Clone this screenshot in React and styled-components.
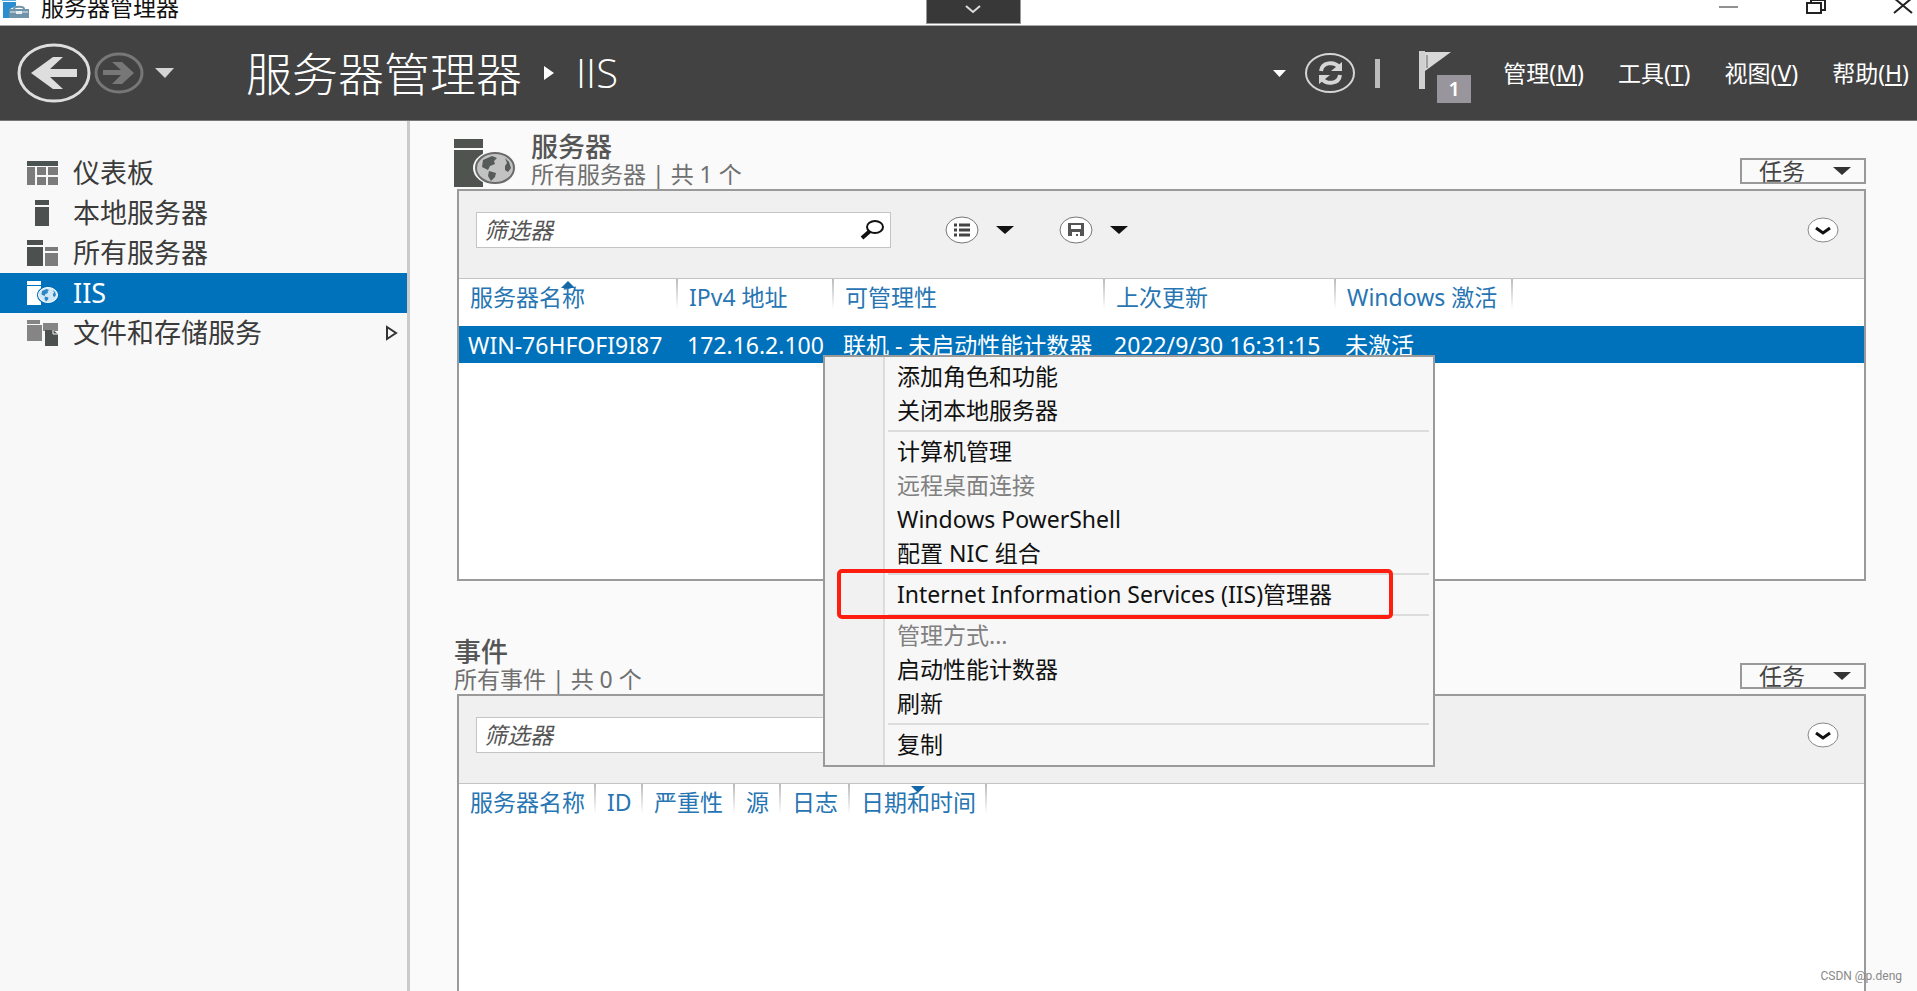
import React from "react";
import { createGlobalStyle, styled, css } from "styled-components";

const GlobalStyle = createGlobalStyle`
  * {
    box-sizing: border-box;
  }
  body {
    margin: 0;
    background: #fafafa;
    font-family: "Noto Sans", "Noto Sans CJK SC", sans-serif;
    font-size: 23px;
    color: #222;
  }
  button, input {
    font: inherit;
    color: inherit;
    padding: 0;
    border: none;
    background: none;
  }
  a {
    color: inherit;
    text-decoration: none;
  }
  svg {
    display: block;
    flex: none;
  }
`;

const Window = styled.div`
  display: flex;
  flex-direction: column;
  height: 100vh;
  overflow: hidden;
  position: relative;
`;

const TitleBar = styled.div`
  display: flex;
  justify-content: space-between;
  height: 26px;
  padding: 0 4px 0 2px;
  background: #fff;
  border-bottom: 1px solid #aaa;
`;
const AppName = styled.div`
  display: flex;
  gap: 12px;
  line-height: 14px;
  color: #111;
`;
const WindowControls = styled.div`
  display: flex;
  gap: 67px;
  align-items: flex-start;
`;
const PullTab = styled.button`
  position: absolute;
  top: 0;
  left: calc(50% - 33px);
  width: 95px;
  height: 24px;
  display: flex;
  justify-content: center;
  padding-top: 5px;
  background: #383838;
  border: 1px solid #999;
  border-top: none;
`;

const Header = styled.header`
  display: flex;
  align-items: center;
  height: 95px;
  flex: none;
  padding: 0 8px 0 17px;
  background: #424242;
  border-bottom: 1px solid #777;
  color: #fff;
`;
const NavButtons = styled.div`
  display: flex;
  align-items: center;
  gap: 3px;
`;
const Breadcrumb = styled.h1`
  display: flex;
  align-items: center;
  gap: 22px;
  margin: 0 auto 0 67px;
  font-family: "Open Sans", "Noto Sans CJK SC", sans-serif;
  font-size: 46px;
  font-weight: 300;
  line-height: 60px;
`;
const CurrentPage = styled.span`
  font-size: 40px;
`;
const HeaderTools = styled.div`
  display: flex;
  align-items: center;
  gap: 19px;
`;
const Divider = styled.span`
  width: 5px;
  height: 29px;
  background: #bbb;
`;
const FlagButton = styled.button`
  position: relative;
  display: flex;
  align-items: flex-start;
  width: 53px;
  height: 52px;
  margin: 8px 0 0 19px;
  color: #fff;
`;
const Badge = styled.span`
  position: absolute;
  right: 0;
  bottom: 0;
  width: 34px;
  height: 28px;
  background: #99959d;
  font-weight: 600;
  font-size: 20px;
  line-height: 28px;
`;
const MenuBar = styled.nav`
  display: flex;
  gap: 34px;
  margin-left: 32px;
`;
const MenuBarButton = styled.button`
  line-height: 32px;
  white-space: nowrap;
`;

const Body = styled.div`
  display: flex;
  flex: 1;
  min-height: 0;
`;
const Sidebar = styled.nav`
  flex: none;
  width: 410px;
  padding-top: 32px;
  background: #f8f8f8;
  border-right: 3px solid #cbcbcb;
`;
const SideLink = styled.a`
  display: flex;
  align-items: center;
  gap: 15px;
  height: 40px;
  padding: 0 9px 0 27px;
  font-size: 27px;
  line-height: 40px;
  color: #3b3b3b;

  span {
    flex: 1;
  }
  ${(props) =>
    props.$active &&
    css`
      background: #0072bc;
      color: #fff;
    `}
`;

const Main = styled.main`
  flex: 1;
  min-width: 0;
  display: flex;
  flex-direction: column;
  gap: 57px;
  padding: 12px 51px 0 44px;
`;
const Section = styled.section`
  display: flex;
  flex-direction: column;
  gap: 2px;
  ${(props) => props.$grow && "flex: 1; min-height: 0;"}
`;
const SectionHead = styled.div`
  display: flex;
  align-items: flex-end;
  gap: 15px;
  height: 54px;
`;
const SectionTitle = styled.div`
  flex: 1;
  color: #707070;

  h2 {
    margin: 0;
    font-size: 27px;
    line-height: 28px;
    font-weight: 500;
    color: #555;
  }
  p {
    margin: 0;
    line-height: 26px;
  }
`;
const TaskButton = styled.button`
  display: flex;
  align-items: center;
  justify-content: space-between;
  width: 126px;
  height: 26px;
  margin-bottom: 3px;
  padding: 0 13px 0 17px;
  border: 2px solid #999;
  line-height: 22px;
  color: #444;
`;
const Panel = styled.div`
  margin-left: 3px;
  background: #fff;
  border: 2px solid #9a9a9a;
  ${(props) =>
    props.$grow ? "flex: 1; border-bottom: none;" : "min-height: 392px;"}
`;
const Toolbar = styled.div`
  display: flex;
  align-items: center;
  padding: 21px 25px 30px 17px;
  background: #f0f0f0;
  border-bottom: 1px solid #c4c4c4;
`;
const SearchBox = styled.div`
  display: flex;
  align-items: center;
  width: 415px;
  height: 36px;
  padding: 0 6px 0 7px;
  background: #fff;
  border: 1px solid #c4c4c4;

  input {
    flex: 1;
    min-width: 0;
    outline: none;
  }
  input::placeholder {
    color: #555;
    font-style: italic;
    opacity: 1;
  }
`;
const ToolGroup = styled.div`
  display: flex;
  align-items: center;
  gap: 17px;
  margin-left: ${(props) => props.$offset}px;
`;
const ExpandButton = styled.button`
  margin-left: auto;
`;

const Table = styled.table`
  width: 100%;
  table-layout: fixed;
  border-collapse: collapse;
  white-space: nowrap;

  th {
    position: relative;
    height: 47px;
    padding: 0 0 11px 11px;
    text-align: left;
    font-weight: 400;
    color: #2775b3;
  }
  th:not(:last-child) {
    background: linear-gradient(#bbb, #fff) right top / 2px 30px no-repeat;
  }
  th button {
    display: block;
    line-height: 36px;
  }
  td {
    height: 37px;
    padding: 2px 0 0 9px;
    line-height: 35px;
  }
`;
const SelectedRow = styled.tr`
  background: #0072bc;
  color: #fff;
`;
const SortMark = styled.svg`
  position: absolute;
  top: 2px;
  left: calc(50% - 8px);
`;

const ContextMenu = styled.ul`
  position: absolute;
  top: 355px;
  left: 823px;
  width: 612px;
  margin: 0;
  padding: 2px 4px 4px 0;
  list-style: none;
  background: linear-gradient(to right, #f1f1f1 58px, #dcdcdc 58px 60px, #f7f7f7 60px);
  border: 2px solid #9a9a9a;
`;
const MenuItem = styled.li`
  position: relative;

  button {
    display: block;
    width: 100%;
    padding-left: 72px;
    text-align: left;
    line-height: 34px;
    color: #111;
  }
  button:disabled {
    color: #808080;
  }
`;
const MenuSeparator = styled.li`
  height: 2px;
  margin: 3px 0 2px 63px;
  background: #dcdcdc;
`;
const Highlight = styled.span`
  position: absolute;
  top: -8px;
  left: 12px;
  width: 556px;
  height: 50px;
  border: 4px solid #ff1d0f;
  border-radius: 5px;
  pointer-events: none;
`;
const Watermark = styled.small`
  position: absolute;
  right: 15px;
  bottom: 7px;
  font-family: Roboto, sans-serif;
  font-size: 12px;
  line-height: 16px;
  color: #888;
`;

function Caret({ width = 18, height = 8, color = "#111" }) {
  return (
    <svg width={width} height={height} viewBox="0 0 18 8" preserveAspectRatio="none">
      <path d="M0 0h18L9 8z" fill={color} />
    </svg>
  );
}

function ToolboxIcon() {
  return (
    <svg width="27" height="18" viewBox="0 0 27 18">
      <path d="M1 2h13v4L8 9v9H1z" fill="#2a8fd0" />
      <path d="M0 0h14v1H0z" fill="#5cb1e4" />
      <path d="M12 9c0-3 10-3 10 0" fill="none" stroke="#6f93a8" strokeWidth="2" />
      <path d="M7 9h20v9H7z" fill="#6f93a8" />
      <path d="M8 12h18" stroke="#e8f0f4" />
      <path d="M14 11h6v3h-6z" fill="#e8f0f4" />
    </svg>
  );
}

function BackIcon() {
  return (
    <svg width="74" height="60" viewBox="0 0 74 60">
      <ellipse cx="37" cy="30" rx="35" ry="28" fill="none" stroke="#dedede" strokeWidth="3" />
      <path d="M14 30 36 14h10L33 26h27v8H33l13 12H36z" fill="#dedede" />
    </svg>
  );
}

function ForwardIcon() {
  return (
    <svg width="50" height="42" viewBox="0 0 50 42">
      <ellipse cx="25" cy="21" rx="23" ry="19" fill="none" stroke="#777" strokeWidth="3" />
      <path d="M40 21 28 10H18l9 8H9v5h18l-9 9h10z" fill="#777" />
    </svg>
  );
}

function RefreshIcon() {
  return (
    <svg width="51" height="42" viewBox="0 0 51 42">
      <ellipse cx="25" cy="21" rx="24" ry="19" fill="none" stroke="#d5d5d5" strokeWidth="2" />
      <path d="M16 19c1-9 13-10 18-4M35 23c-1 9-13 10-18 4" fill="none" stroke="#d5d5d5" strokeWidth="4" />
      <path d="M37 10v9H26zM14 32v-9h11z" fill="#d5d5d5" />
    </svg>
  );
}

function FlagIcon() {
  return (
    <svg width="34" height="39" viewBox="0 0 34 39">
      <path d="M1 0h6v38H1z" fill="#d0d0d0" />
      <path d="M7 1h26L7 20z" fill="#d8d8d8" />
      <path d="M9 4v13" stroke="#666" />
    </svg>
  );
}

function Globe({ x, y, scale, land, sea, ring }) {
  return (
    <g transform={`translate(${x} ${y}) scale(${scale})`}>
      <ellipse cx="20" cy="16" rx="19" ry="15" fill={sea} stroke={ring} strokeWidth="2" />
      <path d="M8 8l9-4 5 2-3 3 1 3-5 2-2 4-6-3zM14 19l7 2-1 4-4 4-3-5zM30 6l4 4 2 6-3 4-3-2 0-4 2-3z" fill={land} />
    </g>
  );
}

function DashboardIcon() {
  return (
    <svg width="31" height="24" viewBox="0 0 31 24">
      <path d="M0 0h31v5H0z" fill="#4a5252" />
      <path d="M0 6h8v18H0zM10 6h9v8h-9zM21 6h10v8H21zM10 16h9v8h-9zM21 16h10v8H21z" fill="#7b7b7b" />
    </svg>
  );
}

function LocalServerIcon() {
  return (
    <svg width="31" height="26" viewBox="0 0 31 26">
      <path d="M8 0h14v5H8zM8 7h14v19H8z" fill="#4c514f" />
    </svg>
  );
}

function AllServersIcon() {
  return (
    <svg width="31" height="26" viewBox="0 0 31 26">
      <path d="M0 0h16v5H0zM0 7h16v19H0z" fill="#4c514f" />
      <path d="M18 7h13v4H18zM18 13h13v13H18z" fill="#7b7b7b" />
    </svg>
  );
}

function IisIcon() {
  return (
    <svg width="31" height="26" viewBox="0 0 31 26">
      <path d="M0 1h14v4H0zM0 6h14v19H0z" fill="#fff" />
      <ellipse cx="21" cy="15" rx="11" ry="9" fill="#0072bc" />
      <Globe x="11" y="7" scale="0.5" land="#2f86c4" sea="#d3e8f6" ring="#fff" />
    </svg>
  );
}

function StorageIcon() {
  return (
    <svg width="31" height="26" viewBox="0 0 31 26">
      <path d="M0 0h13v4H0zM0 5h15v16H0zM16 3h15v8H16z" fill="#858585" />
      <path d="M18 10h8l5 4v12H18z" fill="#4c514f" />
      <path d="M26 10v4h5" fill="none" stroke="#f8f8f8" />
    </svg>
  );
}

function ServerGlobeIcon() {
  return (
    <svg width="62" height="48" viewBox="0 0 62 48">
      <path d="M0 0h29v9H0zM0 11h29v37H0z" fill="#4f5451" />
      <ellipse cx="41" cy="29" rx="22" ry="17" fill="#f9f9f9" />
      <Globe x="21" y="13" scale="1" land="#565a58" sea="#c2c2c2" ring="#6a6a6a" />
    </svg>
  );
}

function SearchIcon() {
  return (
    <svg width="24" height="20" viewBox="0 0 24 20">
      <ellipse cx="15" cy="7" rx="8" ry="6" fill="none" stroke="#111" strokeWidth="2" />
      <path d="M10 11 2 18" stroke="#111" strokeWidth="4" />
    </svg>
  );
}

function ListIcon() {
  return (
    <svg width="34" height="28" viewBox="0 0 34 28">
      <ellipse cx="17" cy="14" rx="16" ry="13" fill="#fff" stroke="#777" />
      <path d="M9 9h3M14 9h11M9 14h3M14 14h11M9 19h3M14 19h11" stroke="#444" strokeWidth="3" />
    </svg>
  );
}

function SaveIcon() {
  return (
    <svg width="34" height="28" viewBox="0 0 34 28">
      <ellipse cx="17" cy="14" rx="16" ry="13" fill="#fff" stroke="#777" />
      <path d="M9 7h16v13H9z" fill="#555" />
      <path d="M12 9h10v4H12zM13 16h8v4h-2v-2h-2v2h-4z" fill="#fff" />
    </svg>
  );
}

function ExpandIcon() {
  return (
    <svg width="32" height="26" viewBox="0 0 32 26">
      <ellipse cx="16" cy="13" rx="15" ry="12" fill="#fff" stroke="#888" />
      <path d="m9 11 7 5 7-5" fill="none" stroke="#111" strokeWidth="3" />
    </svg>
  );
}

const sideItems = [
  { label: "仪表板", icon: <DashboardIcon /> },
  { label: "本地服务器", icon: <LocalServerIcon /> },
  { label: "所有服务器", icon: <AllServersIcon /> },
  { label: "IIS", icon: <IisIcon />, active: true },
  { label: "文件和存储服务", icon: <StorageIcon />, expandable: true },
];

const menus = [
  ["管理", "M"],
  ["工具", "T"],
  ["视图", "V"],
  ["帮助", "H"],
];

const serverColumns = [
  { label: "服务器名称", width: 219, sort: "asc" },
  { label: "IPv4 地址", width: 156 },
  { label: "可管理性", width: 271 },
  { label: "上次更新", width: 231 },
  { label: "Windows 激活", width: 177 },
];

const servers = [
  [
    "WIN-76HFOFI9I87",
    "172.16.2.100",
    "联机 - 未启动性能计数器",
    "2022/9/30 16:31:15",
    "未激活",
  ],
];

const eventColumns = [
  { label: "服务器名称", width: 137 },
  { label: "ID", width: 47 },
  { label: "严重性", width: 92 },
  { label: "源", width: 46 },
  { label: "日志", width: 69 },
  { label: "日期和时间", width: 137, sort: "desc" },
];

const contextItems = [
  { label: "添加角色和功能" },
  { label: "关闭本地服务器" },
  null,
  { label: "计算机管理" },
  { label: "远程桌面连接", disabled: true },
  { label: "Windows PowerShell" },
  { label: "配置 NIC 组合" },
  null,
  { label: "Internet Information Services (IIS)管理器", marked: true },
  null,
  { label: "管理方式...", disabled: true },
  { label: "启动性能计数器" },
  { label: "刷新" },
  null,
  { label: "复制" },
];

function DataTable({ columns, rows = [] }) {
  return (
    <Table>
      <colgroup>
        {columns.map((col) => (
          <col key={col.label} width={col.width} />
        ))}
        <col />
      </colgroup>
      <thead>
        <tr>
          {columns.map((col) => (
            <th key={col.label}>
              <button>{col.label}</button>
              {col.sort && (
                <SortMark width="14" height="7" viewBox="0 0 14 7">
                  <path
                    d={col.sort === "asc" ? "M0 7 7 0l7 7z" : "M0 0h14L7 7z"}
                    fill="#1468a8"
                  />
                </SortMark>
              )}
            </th>
          ))}
          <th />
        </tr>
      </thead>
      <tbody>
        {rows.map((row) => (
          <SelectedRow key={row[0]}>
            {row.map((cell) => (
              <td key={cell}>{cell}</td>
            ))}
            <td />
          </SelectedRow>
        ))}
      </tbody>
    </Table>
  );
}

function ServerSection({ title, summary, icon, grow, columns, rows }) {
  return (
    <Section $grow={grow}>
      <SectionHead>
        {icon}
        <SectionTitle>
          <h2>{title}</h2>
          <p>{summary}</p>
        </SectionTitle>
        <TaskButton>
          任务
          <Caret color="#333" />
        </TaskButton>
      </SectionHead>
      <Panel $grow={grow}>
        <Toolbar>
          <SearchBox>
            <input type="text" placeholder="筛选器" aria-label="筛选器" />
            <button aria-label="搜索">
              <SearchIcon />
            </button>
          </SearchBox>
          <ToolGroup $offset={54}>
            <button aria-label="列表">
              <ListIcon />
            </button>
            <Caret />
          </ToolGroup>
          <ToolGroup $offset={45}>
            <button aria-label="保存">
              <SaveIcon />
            </button>
            <Caret />
          </ToolGroup>
          <ExpandButton aria-label="展开">
            <ExpandIcon />
          </ExpandButton>
        </Toolbar>
        <DataTable columns={columns} rows={rows} />
      </Panel>
    </Section>
  );
}

export default function App() {
  return (
    <>
      <GlobalStyle />
      <Window>
        <TitleBar>
          <AppName>
            <ToolboxIcon />
            服务器管理器
          </AppName>
          <WindowControls>
            <button aria-label="最小化">
              <svg width="20" height="14" viewBox="0 0 20 14">
                <path d="M0 7h19" stroke="#222" strokeWidth="1" />
              </svg>
            </button>
            <button aria-label="还原">
              <svg width="20" height="14" viewBox="0 0 20 14">
                <path d="M1 3h14v10H1zM5 3V0h14v10h-4" fill="none" stroke="#222" strokeWidth="2" />
              </svg>
            </button>
            <button aria-label="关闭">
              <svg width="20" height="14" viewBox="0 0 20 14">
                <path d="M1-2l18 15M19-2 1 13" stroke="#222" strokeWidth="2" />
              </svg>
            </button>
          </WindowControls>
          <PullTab aria-label="展开">
            <svg width="16" height="9" viewBox="0 0 16 9">
              <path d="m1 1 7 6 7-6" fill="none" stroke="#ddd" strokeWidth="2" />
            </svg>
          </PullTab>
        </TitleBar>

        <Header>
          <NavButtons>
            <button aria-label="后退">
              <BackIcon />
            </button>
            <button aria-label="前进">
              <ForwardIcon />
            </button>
            <button aria-label="历史记录">
              <svg width="32" height="10" viewBox="0 0 32 10">
                <path d="M8 0h19l-9 10z" fill="#d4d4d4" />
              </svg>
            </button>
          </NavButtons>
          <Breadcrumb>
            服务器管理器
            <svg width="10" height="14" viewBox="0 0 10 14">
              <path d="M0 0l10 7-10 7z" fill="#fff" />
            </svg>
            <CurrentPage>IIS</CurrentPage>
          </Breadcrumb>
          <HeaderTools>
            <Caret width={13} height={7} color="#fff" />
            <button aria-label="刷新">
              <RefreshIcon />
            </button>
            <Divider />
            <FlagButton aria-label="通知">
              <FlagIcon />
              <Badge>1</Badge>
            </FlagButton>
          </HeaderTools>
          <MenuBar>
            {menus.map(([label, key]) => (
              <MenuBarButton key={key}>
                {label}(<u>{key}</u>)
              </MenuBarButton>
            ))}
          </MenuBar>
        </Header>

        <Body>
          <Sidebar>
            {sideItems.map((item) => (
              <SideLink key={item.label} href="#" $active={item.active}>
                {item.icon}
                <span>{item.label}</span>
                {item.expandable && (
                  <svg width="12" height="16" viewBox="0 0 12 16">
                    <path d="M1 2l9 6-9 6z" fill="none" stroke="#333" strokeWidth="2" />
                  </svg>
                )}
              </SideLink>
            ))}
          </Sidebar>
          <Main>
            <ServerSection
              title="服务器"
              summary="所有服务器 | 共 1 个"
              icon={<ServerGlobeIcon />}
              columns={serverColumns}
              rows={servers}
            />
            <ServerSection
              title="事件"
              summary="所有事件 | 共 0 个"
              columns={eventColumns}
              grow
            />
          </Main>
        </Body>

        <ContextMenu>
          {contextItems.map((item, i) =>
            item ? (
              <MenuItem key={item.label}>
                <button disabled={item.disabled}>{item.label}</button>
                {item.marked && <Highlight />}
              </MenuItem>
            ) : (
              <MenuSeparator key={i} />
            )
          )}
        </ContextMenu>
        <Watermark>CSDN @p.deng</Watermark>
      </Window>
    </>
  );
}
